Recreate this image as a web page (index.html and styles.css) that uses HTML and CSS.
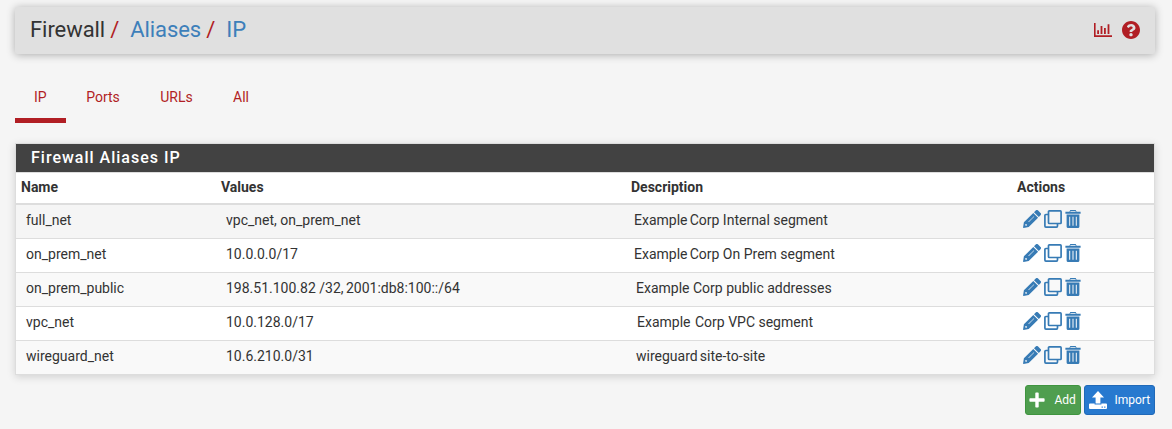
FILE: index.html
```html
<!DOCTYPE html>
<html lang="en">
<head>
<meta charset="utf-8">
<title>Firewall: Aliases: IP</title>
<link rel="stylesheet" href="styles.css">
</head>
<body>
<svg class="sprite" aria-hidden="true">
  <symbol id="pencil" viewBox="0 0 18 18"><path fill-rule="evenodd" d="M10.300 2.900l4.800 4.800L5.700 17.100l-5.100.8a.5.5 0 0 1-.5-.6l.8-5zM2.500 14l-.3 1.300.5.5 1.300-.3v-.9H3.300V14zM5.500 11.600a.25.25 0 0 0 .4.400l5.200-5.200a.25.25 0 0 0-.4-.4zM11 2.200L12.700.5a1.700 1.700 0 0 1 2.400 0l2.400 2.400a1.700 1.700 0 0 1 0 2.400L15.800 7z"/></symbol>
  <symbol id="clone" viewBox="0 0 18 18"><g fill="none" stroke="currentColor" stroke-width="1.700"><rect x="4.500" y=".9" width="12.600" height="12.600" rx=".8"/><path d="M4.500 4.500H1.900a1 1 0 0 0-1 1v10.600a1 1 0 0 0 1 1h10.600a1 1 0 0 0 1-1v-2.600"/></g></symbol>
  <symbol id="trash" viewBox="0 0 16 18"><path fill-rule="evenodd" d="M5.300 0h5.400l.9 1.700h4v2H.4v-2h4zM5.600 1l-.4.7h5.600l-.4-.7zM1.600 4.500h12.800v12a1.500 1.500 0 0 1-1.500 1.500H3.100a1.500 1.500 0 0 1-1.500-1.500zM4.200 6.700v9.100h1V6.700zM7.500 6.700v9.100h1V6.700zM10.800 6.700v9.100h1V6.700z"/></symbol>
</svg>
<header class="page-header">
  <ol class="breadcrumb"><li>Firewall</li><li><a>Aliases</a></li><li><a>IP</a></li></ol>
  <div class="tools">
    <svg class="chart" viewBox="0 0 18 14"><path d="M0 0h1.600v12.200H18V14H0zM3.200 7.200h1.800v3.800H3.200zM6.600 3h1.800v8H6.600zM10 5h1.800v6H10zM13.600 1.200h1.800V11h-1.800z"/></svg>
    <svg class="help" viewBox="8 8 496 496"><path d="M504 256c0 136.997-111.043 248-248 248S8 392.997 8 256C8 119.083 119.043 8 256 8s248 111.083 248 248zM262.655 90c-54.497 0-89.255 22.957-116.549 63.758-3.536 5.286-2.353 12.415 2.715 16.258l34.699 26.310c5.205 3.947 12.621 3.008 16.665-2.122 17.864-22.658 30.113-35.797 57.303-35.797 20.429 0 45.698 13.148 45.698 32.958 0 14.976-12.363 22.667-32.534 33.976C247.128 238.528 216 254.941 216 296v4c0 6.627 5.373 12 12 12h56c6.627 0 12-5.373 12-12v-1.333c0-28.462 83.186-29.647 83.186-106.667 0-58.002-60.165-102-116.531-102zM256 338c-25.365 0-46 20.635-46 46 0 25.364 20.635 46 46 46s46-20.636 46-46c0-25.365-20.635-46-46-46z"/></svg>
  </div>
</header>
<nav class="tabs"><a class="active">IP</a><a>Ports</a><a>URLs</a><a>All</a></nav>
<section class="panel">
  <h2>Firewall Aliases IP</h2>
  <table>
    <colgroup><col class="c-name"><col class="c-values"><col class="c-desc"><col></colgroup>
    <thead><tr><th>Name</th><th>Values</th><th>Description</th><th>Actions</th></tr></thead>
    <tbody>
      <tr class="hover"><td>full_net</td><td>vpc_net, on_prem_net</td><td class="desc tight"><span class="lead">Example </span>Corp Internal segment</td><td><div class="actions"><svg class="i18"><use href="#pencil"/></svg><svg class="i18"><use href="#clone"/></svg><svg class="i16"><use href="#trash"/></svg></div></td></tr>
      <tr><td>on_prem_net</td><td>10.0.0.0/17</td><td class="desc tight"><span class="lead">Example </span>Corp On Prem segment</td><td><div class="actions"><svg class="i18"><use href="#pencil"/></svg><svg class="i18"><use href="#clone"/></svg><svg class="i16"><use href="#trash"/></svg></div></td></tr>
      <tr><td>on_prem_public</td><td>198.51.100.82 <span class="snug">/32, </span>2001:db8:100::/64</td><td class="desc">Example Corp public addresses</td><td><div class="actions"><svg class="i18"><use href="#pencil"/></svg><svg class="i18"><use href="#clone"/></svg><svg class="i16"><use href="#trash"/></svg></div></td></tr>
      <tr><td>vpc_net</td><td>10.0.128.0/17</td><td class="desc wide"><span class="loose">Example </span>Corp VPC segment</td><td><div class="actions"><svg class="i18"><use href="#pencil"/></svg><svg class="i18"><use href="#clone"/></svg><svg class="i16"><use href="#trash"/></svg></div></td></tr>
      <tr><td>wireguard_net</td><td>10.6.210.0/31</td><td class="desc"><span class="lead">wireguard </span>site-to-site</td><td><div class="actions"><svg class="i18"><use href="#pencil"/></svg><svg class="i18"><use href="#clone"/></svg><svg class="i16"><use href="#trash"/></svg></div></td></tr>
    </tbody>
  </table>
</section>
<div class="buttons">
  <a class="btn add"><svg viewBox="0 0 16 16"><path d="M6.300 1.200a.8.8 0 0 1 .8-.8h1.800a.8.8 0 0 1 .8.8v5.100h5.100a.8.8 0 0 1 .8.8v1.800a.8.8 0 0 1-.8.8H9.700v5.100a.8.8 0 0 1-.8.8H7.100a.8.8 0 0 1-.8-.8V9.700H1.200a.8.8 0 0 1-.8-.8V7.100a.8.8 0 0 1 .8-.8h5.100z"/></svg><span>Add</span></a>
  <a class="btn import"><svg viewBox="0 0 18 18"><path d="M9 0l6 6.600h-3.600v6H6.600v-6H3zM1 12.600h4.600v1h6.800v-1H17a1 1 0 0 1 1 1V17a1 1 0 0 1-1 1H1a1 1 0 0 1-1-1v-3.400a1 1 0 0 1 1-1z"/><path class="dots" d="M12.600 15.500h1.200v1.200h-1.200zM15.200 15.500h1.200v1.200h-1.200z"/></svg><span>Import</span></a>
</div>
</body>
</html>
```
FILE: styles.css
```css
* { box-sizing: border-box; }
body { margin: 0; padding: 7px 17px 0 15px; height: 429px; overflow: hidden; background: #f5f5f5; color: #333; font: 14px/20px Roboto, sans-serif; }
.sprite { display: none; }
svg { display: block; fill: currentColor; }
.page-header { display: flex; justify-content: space-between; align-items: center; height: 47px; padding: 0 15px; background: #e0e0e0; border-radius: 2px; box-shadow: 0 1px 8px rgba(0,0,0,.3); }
.breadcrumb { display: flex; margin: 0; padding: 0 0 2px; list-style: none; font-size: 22px; line-height: 44px; letter-spacing: -.06px; }
.breadcrumb li + li::before { content: "/"; color: #b11e24; padding: 0 11px 0 5px; }
.breadcrumb a { color: #3d7fba; }
.tools { display: flex; align-items: center; gap: 10px; padding-bottom: 1px; color: #b11e24; }
.chart { width: 18px; height: 14px; }
.help { width: 18px; height: 18px; }
.tabs { display: flex; margin-top: 23px; height: 46px; color: #b11e24; }
.tabs a { padding: 10px 20.200px 0; border-bottom: 5px solid transparent; }
.tabs .active { width: 51px; padding-left: 19px; border-color: #b11e24; }
.panel { margin-top: 20px; border: 1px solid #ddd; box-shadow: 0 2px 8px rgba(0,0,0,.15); background: #fff; }
h2 { margin: 0; height: 28px; padding-left: 15px; background: #424242; color: #fff; font-size: 16px; line-height: 27px; font-weight: 500; letter-spacing: 1px; }
table { width: 100%; table-layout: fixed; border-collapse: separate; border-spacing: 0; border-top: 1px solid #ddd; }
.c-name { width: 200px; }
.c-values { width: 410px; }
.c-desc { width: 386px; }
th { height: 32px; padding: 0 5px 2px; text-align: left; font-weight: 700; line-height: 26px; border-bottom: 2px solid #ddd; }
td { height: 34px; padding: 0 10px 3px; border-bottom: 1px solid #ddd; line-height: 28px; white-space: pre; }
tr:last-child td { border-bottom: 0; height: 33px; }
tbody tr:nth-child(odd) { background: #f9f9f9; }
tbody tr.hover { background: #f5f5f5; }
.tight { padding-left: 8px; }
.wide { padding-left: 11px; }
.lead { word-spacing: -1.300px; }
.snug { word-spacing: -1px; }
.loose { word-spacing: 1px; }
.actions { display: flex; gap: 3px; padding: 0 0 2px .6px; color: #377bb5; }
.i18 { width: 18px; height: 18px; }
.i16 { width: 16px; height: 18px; }
.buttons { display: flex; justify-content: flex-end; gap: 3px; margin-top: 10px; }
.btn { display: flex; align-items: center; height: 30px; border: 1px solid; border-radius: 3px; color: #fff; font-size: 12px; }
.add { width: 56px; padding-left: 3px; gap: 9.500px; background: #4f9e4f; border-color: #3f943f; }
.import { width: 71px; padding-left: 4px; gap: 7.500px; background: #2779cf; border-color: #2069b8; }
.btn svg { fill: #fff; margin-bottom: 1px; }
.add svg { width: 16px; height: 16px; }
.import svg { width: 18px; height: 18px; }
.btn .dots { fill: #2779cf; }
```
